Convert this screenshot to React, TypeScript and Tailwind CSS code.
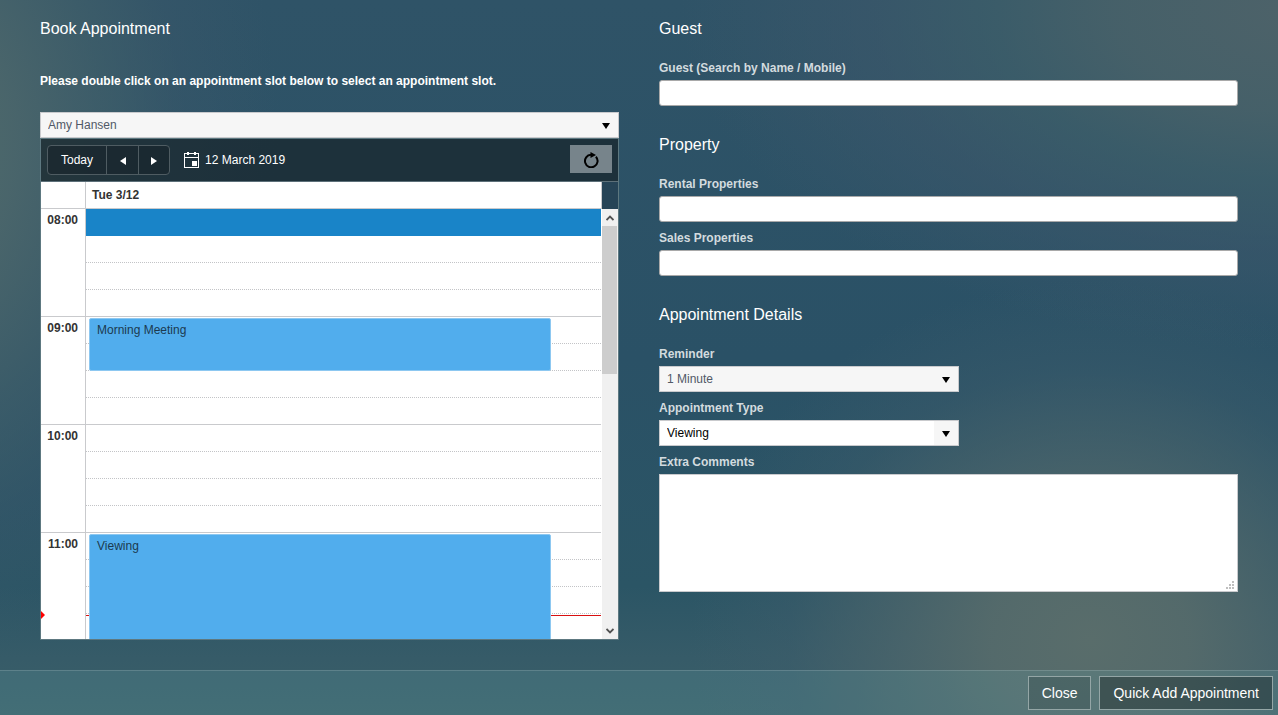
import React, { ReactNode, useState } from 'react';

interface CalendarEvent {
  id: number;
  title: string;
  // minutes after the first hour of the day view
  start: number;
  duration: number;
}

const MINUTE_HEIGHT = 108 / 60;

const hours = ['08:00', '09:00', '10:00', '11:00'];

const events: CalendarEvent[] = [
  { id: 1, title: 'Morning Meeting', start: 60, duration: 30 },
  { id: 2, title: 'Viewing', start: 180, duration: 60 },
];

const CalendarIcon = () => (
  <svg width="15" height="16" viewBox="0 0 15 16" fill="currentColor" aria-hidden="true">
    <path
      fillRule="evenodd"
      d="M3 0h2v1h5V0h2v1h3v15H0V1h3V0ZM1 2v3h13V2h-2v1h-2V2H5v1H3V2H1Zm0 4v9h13V6H1Z"
    />
    <path d="M8 9h5v5H8z" />
  </svg>
);

const RefreshIcon = () => (
  <svg width="16" height="16" viewBox="0 0 16 16" fill="none" className="mt-0.5" aria-hidden="true">
    <path d="M12.9 4.7A6.3 6.3 0 1 1 8 2.7" stroke="black" strokeWidth="2" />
    <path d="M7.5 0 13 3 7.5 6Z" fill="black" />
  </svg>
);

const Section = ({ title, children }: { title: string; children: ReactNode }) => (
  <section>
    <h2 className="text-base leading-[26px] text-white">{title}</h2>
    <div className="mt-[18px] flex flex-col gap-2">{children}</div>
  </section>
);

const Field = ({ id, label, children }: { id: string; label: string; children: ReactNode }) => (
  <div className="flex flex-col gap-1">
    <label htmlFor={id} className="text-xs font-bold text-[#d3dbdf]">
      {label}
    </label>
    {children}
  </div>
);

const TextInput = ({ id }: { id: string }) => (
  <input
    id={id}
    type="text"
    className="h-[26px] w-full rounded-[3px] border border-[#a9a9a9] bg-white px-2 text-xs text-black outline-none"
  />
);

interface DropdownProps {
  id?: string;
  ariaLabel?: string;
  options: string[];
  editable?: boolean;
}

const Dropdown = ({ id, ariaLabel, options, editable }: DropdownProps) => (
  <div className="relative">
    <select
      id={id}
      aria-label={ariaLabel}
      className={`block h-[26px] w-full appearance-none border border-[#c9cacd] px-[7px] text-xs outline-none ${
        editable ? 'bg-white text-black' : 'bg-[#f6f6f6] text-[#515967]'
      }`}
    >
      {options.map((option) => (
        <option key={option}>{option}</option>
      ))}
    </select>
    <span className="pointer-events-none absolute inset-y-px right-px flex w-6 items-center justify-center bg-[#f6f6f6]">
      <svg width="8" height="6" viewBox="0 0 8 6" className="mt-0.5" aria-hidden="true">
        <path d="M0 0h8L4 6Z" fill="black" />
      </svg>
    </span>
  </div>
);

const Toolbar = () => (
  <div className="flex h-[43px] items-center border-b border-[#5d7079] bg-[#172329]/70 px-1.5 text-xs text-white">
    <div className="flex h-[30px] divide-x divide-[#4f5c62] rounded border border-[#4f5c62] bg-[#18232a]/60">
      <button type="button" className="px-[13px]">
        Today
      </button>
      <button type="button" aria-label="Previous day" className="flex w-8 items-center justify-center">
        <svg width="6" height="8" viewBox="0 0 6 8" className="mt-0.5" aria-hidden="true">
          <path d="M6 0v8L0 4Z" fill="currentColor" />
        </svg>
      </button>
      <button type="button" aria-label="Next day" className="flex w-[30px] items-center justify-center">
        <svg width="6" height="8" viewBox="0 0 6 8" className="mt-0.5" aria-hidden="true">
          <path d="M0 0v8l6-4Z" fill="currentColor" />
        </svg>
      </button>
    </div>
    <button type="button" className="ml-3.5 flex items-center gap-1.5">
      <CalendarIcon />
      12 March 2019
    </button>
    <button
      type="button"
      aria-label="Refresh"
      className="mb-0.5 ml-auto flex h-7 w-[42px] items-center justify-center bg-[#77848b]"
    >
      <RefreshIcon />
    </button>
  </div>
);

const ScrollBar = () => (
  <div className="flex w-4 shrink-0 flex-col bg-[#f0f0f0] text-[#505050]">
    <button type="button" aria-label="Scroll up" className="flex h-[17px] items-center justify-center">
      <svg width="8" height="6" viewBox="0 0 8 6" fill="none" aria-hidden="true">
        <path d="m.5 5 3.5-3.5L7.500 5" stroke="currentColor" strokeWidth="1.8" />
      </svg>
    </button>
    <div className="mr-px h-[148px] bg-[#cdcdcd]" />
    <button type="button" aria-label="Scroll down" className="mt-auto flex h-[17px] items-center justify-center">
      <svg width="8" height="6" viewBox="0 0 8 6" fill="none" aria-hidden="true">
        <path d="M.5 1 4 4.500 7.500 1" stroke="currentColor" strokeWidth="1.8" />
      </svg>
    </button>
  </div>
);

const DayView = () => {
  const [selectedSlot, setSelectedSlot] = useState('08:00-0');

  return (
    <div className="flex h-[430px] overflow-hidden">
      <div className="relative flex-1 bg-white">
        <table className="w-full table-fixed border-separate border-spacing-0">
          <colgroup>
            <col className="w-[45px]" />
            <col />
          </colgroup>
          <tbody>
            {hours.map((hour) =>
              [0, 1, 2, 3].map((quarter) => {
                const slot = `${hour}-${quarter}`;
                const selected = slot === selectedSlot;
                return (
                  <tr key={slot}>
                    {quarter === 0 && (
                      <th
                        scope="row"
                        rowSpan={4}
                        className="border-r border-b border-[#c9cacd] p-0 pt-[3px] pr-[7px] text-right align-top text-xs font-bold text-[#333]"
                      >
                        {hour}
                      </th>
                    )}
                    <td
                      onDoubleClick={() => setSelectedSlot(slot)}
                      className={`h-[27px] border-b p-0 ${
                        selected
                          ? 'border-[#1984c8] bg-[#1984c8]'
                          : quarter === 3
                            ? 'border-[#c9cacd]'
                            : 'border-dotted border-[#c3c4c7]'
                      }`}
                    />
                  </tr>
                );
              })
            )}
          </tbody>
        </table>

        {/* Current time marker */}
        <div className="absolute top-[402px] left-0 h-2 w-1 bg-[#f00] [clip-path:polygon(0_0,100%_50%,0_100%)]" />
        <div className="absolute top-[406px] right-0 left-[45px] h-px bg-[#d81010]" />

        {events.map((event) => (
          <div
            key={event.id}
            className="absolute right-[50px] left-12 mt-px rounded-[2px] border border-[#8dc8f1] bg-[#51aded] px-[7px] pt-[3px] text-xs text-[#1c3a50]"
            style={{
              top: event.start * MINUTE_HEIGHT,
              height: event.duration * MINUTE_HEIGHT - 1,
            }}
          >
            {event.title}
          </div>
        ))}
      </div>
      <div className="w-px bg-white" />
      <ScrollBar />
    </div>
  );
};

const Scheduler = () => (
  <div className="border border-[#5d7880]">
    <Toolbar />
    <div className="flex bg-[#264457] pr-4 text-xs font-bold text-[#333]">
      <div className="h-[27px] w-[45px] border-r border-b border-[#c9cacd] bg-white" />
      <div className="h-[27px] flex-1 border-r border-b border-[#c9cacd] bg-white px-1.5 pt-[5px]">
        Tue 3/12
      </div>
    </div>
    <DayView />
  </div>
);

const App = () => {
  return (
    <div className="flex min-h-screen flex-col bg-[#2b5267] bg-[radial-gradient(ellipse_400px_360px_at_1090px_640px,#596d6b_0%,#566b6bee_25%,#4c656bbb_50%,#3f5d6b66_75%,#2b526700_100%),radial-gradient(ellipse_620px_340px_at_1300px_10px,#4d6269_0%,#496269dd_30%,#40606aaa_50%,#3e586b88_70%,#2b526700_100%),radial-gradient(ellipse_380px_520px_at_-100px_150px,#54706c_0%,#4b666bee_30%,#42606aaa_55%,#3b586a66_75%,#2b526700_100%),linear-gradient(to_bottom,#2f5367_0%,#2a5166_50%,#2b5565_82%,#365b68_92%,#3a5f68_100%)] font-['Liberation_Sans',Arial,sans-serif]">
      <main className="grid flex-1 grid-cols-2 items-start gap-10 px-10 pt-4 pb-[30px]">
        <section>
          <h2 className="text-base leading-[26px] text-white">Book Appointment</h2>
          <p className="mt-[31px] mb-[23px] text-xs font-bold text-white">
            Please double click on an appointment slot below to select an appointment slot.
          </p>
          <Dropdown ariaLabel="Staff member" options={['Amy Hansen']} />
          <Scheduler />
        </section>

        <form className="flex flex-col gap-[26px]">
          <Section title="Guest">
            <Field id="guest" label="Guest (Search by Name / Mobile)">
              <TextInput id="guest" />
            </Field>
          </Section>

          <Section title="Property">
            <Field id="rental" label="Rental Properties">
              <TextInput id="rental" />
            </Field>
            <Field id="sales" label="Sales Properties">
              <TextInput id="sales" />
            </Field>
          </Section>

          <Section title="Appointment Details">
            <div className="flex w-[300px] flex-col gap-2">
              <Field id="reminder" label="Reminder">
                <Dropdown id="reminder" options={['1 Minute', '5 Minutes', '15 Minutes']} />
              </Field>
              <Field id="type" label="Appointment Type">
                <Dropdown id="type" options={['Viewing', 'Meeting']} editable />
              </Field>
            </div>
            <Field id="comments" label="Extra Comments">
              <div className="relative">
                <textarea
                  id="comments"
                  className="block h-[118px] w-full resize-none border border-[#c9cacd] bg-white p-2 text-xs text-black outline-none"
                />
                <svg
                  width="8"
                  height="8"
                  viewBox="0 0 8 8"
                  fill="#bfbfbf"
                  className="absolute right-1 bottom-[3px]"
                  aria-hidden="true"
                >
                  <path d="M6 0h2v2H6zM3 3h2v2H3zM6 3h2v2H6zM0 6h2v2H0zM3 6h2v2H3zM6 6h2v2H6z" />
                </svg>
              </div>
            </Field>
          </Section>
        </form>
      </main>

      <footer className="flex h-[45px] items-center justify-end gap-2 border-t border-white/15 bg-[#6aa8b0]/20 pr-[5px] text-sm text-white">
        <button type="button" className="h-[34px] border border-[#94a6a6] bg-black/15 px-[13px]">
          Close
        </button>
        <button type="button" className="h-[34px] border border-[#94a6a6] bg-black/30 px-[13px]">
          Quick Add Appointment
        </button>
      </footer>
    </div>
  );
};

export default App;
